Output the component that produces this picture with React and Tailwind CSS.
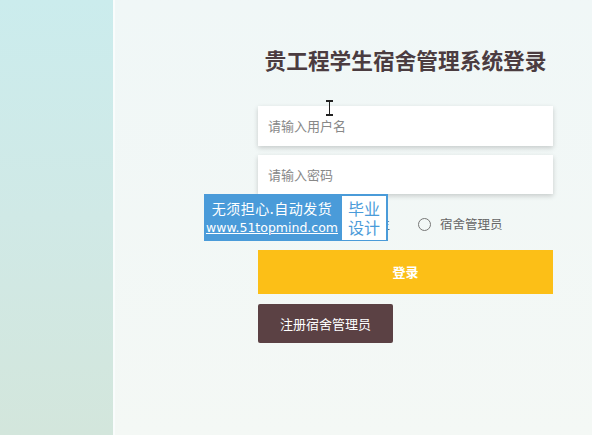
import React from 'react';

export default function App() {
  const font = { fontFamily: '"Noto Sans CJK SC", "Noto Sans", sans-serif' };

  return (
    <div className="relative flex w-[592px] h-[435px] overflow-hidden bg-[#f2f7f6]" style={font}>
      {/* left picture strip */}
      <div className="w-[113px] h-full bg-gradient-to-b from-[#cbeced] via-[#d0e9e6] to-[#d3e6dc]" />
      <div className="w-[2px] h-full bg-[#f9fcfc]" />

      {/* login column */}
      <div className="flex-1 bg-gradient-to-b from-[#f0f7f7] to-[#f4f8f5]">
        <div className="ml-[143px] w-[295px] flex flex-col">
          <h1 className="mt-[43px] text-center text-[21.7px] leading-[34px] font-bold text-[#4b3c40]">
            贵工程学生宿舍管理系统登录
          </h1>

          <div className="mt-[29px] h-[40px] bg-white shadow-[0_2px_5px_rgba(0,0,0,0.18)] flex items-center px-[10px]">
            <span className="text-[13px] text-[#888]">请输入用户名</span>
          </div>
          <div className="mt-[9px] h-[39px] bg-white shadow-[0_2px_5px_rgba(0,0,0,0.18)] flex items-center px-[10px]">
            <span className="text-[13px] text-[#888]">请输入密码</span>
          </div>

          <div className="mt-[21px] h-[18px] flex items-center text-[12.5px] text-[#666]">
            <span className="ml-[86px] w-[12px] h-[12px] rounded-full border border-[#777]" />
            <span className="ml-[9px]">学生</span>
            <span className="ml-[28px] w-[13px] h-[13px] rounded-full border border-[#777]" />
            <span className="ml-[9px]">宿舍管理员</span>
          </div>

          <button className="mt-[17px] h-[44px] bg-[#fcbf17] text-white text-[13px] font-bold">
            登录
          </button>
          <button className="mt-[10px] w-[135px] h-[39px] bg-[#5b4144] text-white text-[13px] rounded-[2px]">
            注册宿舍管理员
          </button>
        </div>
      </div>

      {/* text cursor */}
      <div className="absolute left-[325px] top-[100px] w-[9px] h-[16px] flex flex-col items-center">
        <div className="w-[7px] h-[2px] bg-[#222]" />
        <div className="w-[1.5px] flex-1 bg-[#222]" />
        <div className="w-[7px] h-[2px] bg-[#222]" />
      </div>

      {/* watermark badge */}
      <div className="absolute left-[204px] top-[194px] w-[184px] h-[47px] bg-[#4a9bd9] flex items-center">
        <div className="w-[136px] flex flex-col items-center text-white">
          <div className="text-[14px] leading-[18px] tracking-[0.5px]">无须担心.自动发货</div>
          <div className="text-[12.5px] leading-[17px] underline mt-[2px] font-medium" style={{ fontFamily: '"DejaVu Sans", sans-serif' }}>
            www.51topmind.com
          </div>
        </div>
        <div className="ml-[2px] w-[44px] h-[44px] bg-white flex flex-col items-center justify-center text-[#4a9bd9] text-[16px] leading-[19px]">
          <span>毕业</span>
          <span>设计</span>
        </div>
      </div>
    </div>
  );
}
